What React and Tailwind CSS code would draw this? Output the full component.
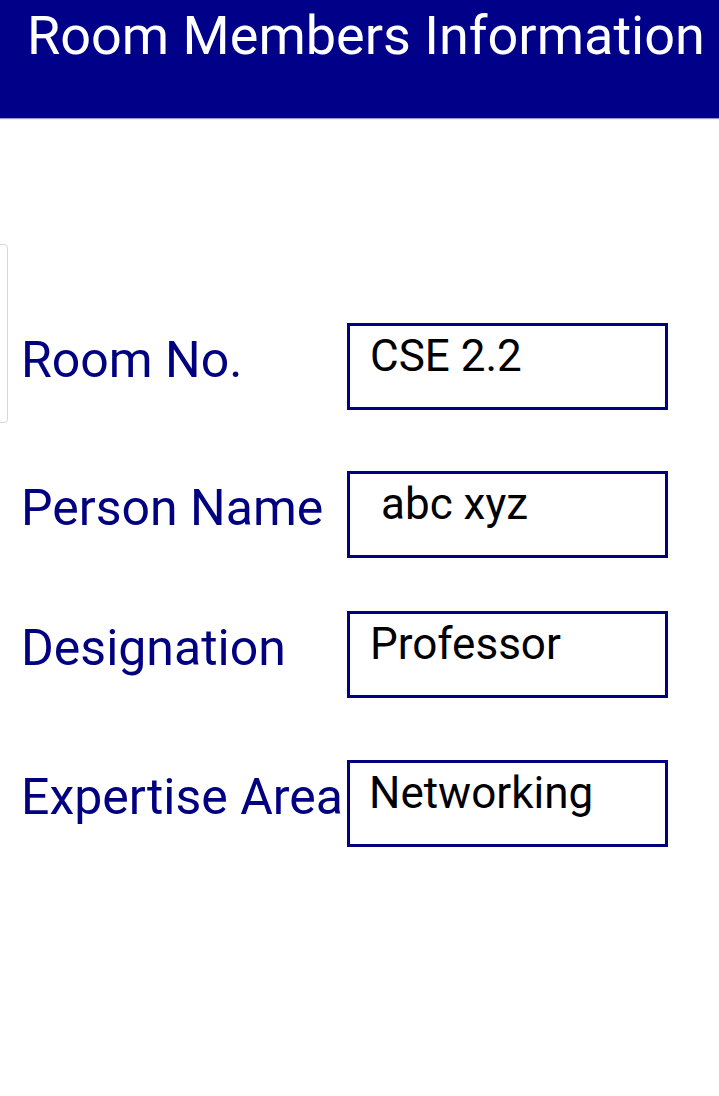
export default function App() {
  const rows = [
    { label: "Room No.", value: "CSE 2.2", mt: "mt-[205px]", pl: "pl-[20px]" },
    { label: "Person Name", value: "abc xyz", mt: "mt-[61px]", pl: "pl-[31px]" },
    { label: "Designation", value: "Professor", mt: "mt-[53px]", pl: "pl-[20px]" },
    { label: "Expertise Area", value: "Networking", mt: "mt-[62px]", pl: "pl-[19px]" },
  ];
  return (
    <div className="relative w-[719px] h-[1096px] bg-white overflow-hidden" style={{ fontFamily: "Roboto, 'Noto Sans', sans-serif" }}>
      <div className="h-[118px] bg-[#000088] flex items-start pl-[27px] pt-[1px] shadow-[0_1px_1px_rgba(0,0,136,0.4)]">
        <span className="text-white text-[54px] leading-[70px] whitespace-nowrap">Room Members Information</span>
      </div>
      <div className="absolute left-[-6px] top-[244px] w-[14px] h-[179px] border border-[#d8d8d8] rounded-[4px] bg-white" />
      <div className="flex flex-col">
        {rows.map((r) => (
          <div key={r.label} className={`flex items-center ${r.mt}`}>
            <div className="w-[347px] pl-[21px] pb-[14px] shrink-0 text-[#000080] text-[50px] leading-none whitespace-nowrap">{r.label}</div>
            <div className={`w-[321px] h-[87px] border-[3px] border-[#000080] ${r.pl} pt-[8px] text-black text-[44px] leading-none`}>
              {r.value}
            </div>
          </div>
        ))}
      </div>
    </div>
  );
}
